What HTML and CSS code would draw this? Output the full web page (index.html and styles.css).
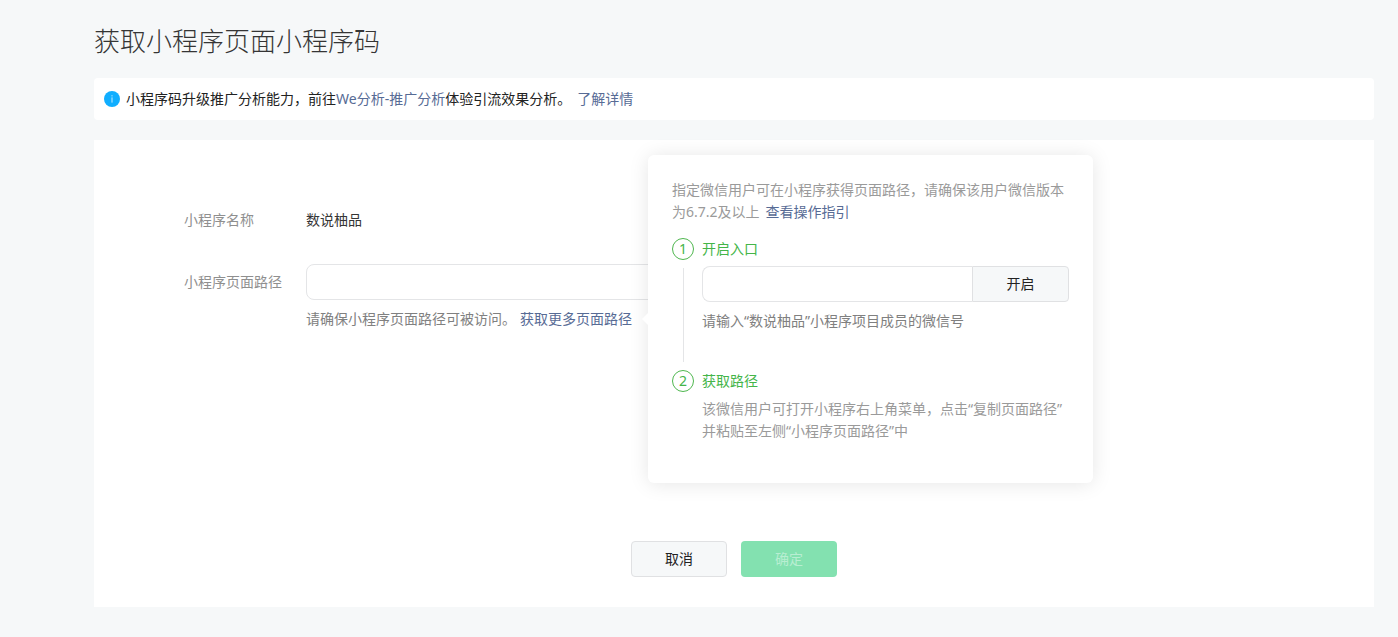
FILE: index.html
```html
<!DOCTYPE html>
<html lang="zh-CN">
<head>
<meta charset="utf-8">
<meta name="viewport" content="width=device-width, initial-scale=1">
<title>获取小程序页面小程序码</title>
<link rel="stylesheet" href="styles.css">
</head>
<body>
<main class="page">
  <h1 class="page-title">获取小程序页面小程序码</h1>

  <div class="notice">
    <svg class="notice-icon" viewBox="0 0 16 16" aria-hidden="true">
      <circle cx="8" cy="8" r="8" fill="#10aeff"/>
      <rect x="7.5" y="4.2" width="1" height="1.2" fill="#fff" opacity=".75"/>
      <rect x="7.5" y="6.4" width="1" height="5.2" fill="#fff" opacity=".75"/>
    </svg>
    <p class="notice-text">小程序码升级推广分析能力，前往<a href="#">We分析-推广分析</a>体验引流效果分析。<a class="spaced" href="#">了解详情</a></p>
  </div>

  <form class="panel">
    <div class="field">
      <span class="field-label">小程序名称</span>
      <span class="field-value">数说柚品</span>
    </div>
    <div class="field">
      <label class="field-label path-label" for="path">小程序页面路径</label>
      <div class="field-body">
        <input class="text-input" id="path" type="text">
        <div class="hint">请确保小程序页面路径可被访问。<span class="anchor"><a href="#">获取更多页面路径</a>
          <section class="popover">
            <p class="popover-intro">指定微信用户可在小程序获得页面路径，请确保该用户微信版本为6.7.2及以上<a class="spaced" href="#">查看操作指引</a></p>
            <ol class="steps">
              <li class="step">
                <div class="step-marker"><span class="step-number">1</span><span class="step-line"></span></div>
                <div class="step-body">
                  <label class="step-title" for="member">开启入口</label>
                  <div class="input-group">
                    <input class="text-input" id="member" type="text">
                    <button class="button group-button" type="button">开启</button>
                  </div>
                  <p class="step-hint">请输入“数说柚品”小程序项目成员的微信号</p>
                </div>
              </li>
              <li class="step">
                <div class="step-marker"><span class="step-number">2</span></div>
                <div class="step-body">
                  <h2 class="step-title">获取路径</h2>
                  <p class="step-text">该微信用户可打开小程序右上角菜单，点击“复制页面路径”并粘贴至左侧“小程序页面路径”中</p>
                </div>
              </li>
            </ol>
          </section></span>
        </div>
      </div>
    </div>
    <div class="actions">
      <button class="button" type="button">取消</button>
      <button class="button primary" type="submit" disabled>确定</button>
    </div>
  </form>
</main>
</body>
</html>
```

FILE: styles.css
```css
* {
  box-sizing: border-box;
}

body {
  margin: 0;
  background: #f6f8f9;
  color: #353535;
  font: 400 14px/22px "Noto Sans", "Noto Sans CJK SC", sans-serif;
}

h1, h2, p, ol {
  margin: 0;
  padding: 0;
  font-weight: inherit;
}

a {
  color: #576b95;
  text-decoration: none;
}

input, button {
  font: inherit;
}

.page {
  padding: 22px 24px 30px 94px;
}

.page-title {
  font-size: 26px;
  font-weight: 300;
  line-height: 38px;
}

.notice {
  display: flex;
  align-items: center;
  gap: 6px;
  margin-top: 18px;
  padding: 10px;
  border-radius: 4px;
  background: #fff;
  color: #222;
}

.notice-icon {
  width: 16px;
  height: 16px;
}

.spaced {
  margin-left: 6px;
}

.panel {
  margin-top: 20px;
  padding: 69px 90px 30px;
  background: #fff;
}

.field {
  display: flex;
}

.field + .field {
  margin-top: 33px;
}

.field-label {
  flex: 0 0 122px;
  color: #8f8f8f;
}

.path-label {
  line-height: 36px;
}

.field-body {
  flex: 0 1 500px;
  min-width: 0;
}

.text-input {
  display: block;
  width: 100%;
  height: 36px;
  padding: 0 10px;
  border: 1px solid #e4e5e7;
  border-radius: 8px;
  background: #fff;
}

.hint {
  margin-top: 8px;
  color: #808080;
}

.anchor {
  position: relative;
  display: inline-block;
  margin-left: 4px;
}

.popover {
  position: absolute;
  z-index: 1;
  top: -153px;
  left: calc(100% + 16px);
  width: 445px;
  padding: 24px 24px 41px;
  border-radius: 6px;
  background: #fff;
  box-shadow: 0 1px 20px rgba(0, 0, 0, 0.1);
  color: #9a9a9a;
}

.popover::before {
  content: "";
  position: absolute;
  top: 158px;
  left: -6px;
  border: solid transparent;
  border-width: 6px 6px 6px 0;
  border-right-color: #fff;
}

.steps {
  margin-top: 15px;
  list-style: none;
}

.step {
  display: flex;
  gap: 8px;
}

.step-marker {
  display: flex;
  flex-direction: column;
  align-items: center;
}

.step-number {
  width: 22px;
  height: 22px;
  border: 1px solid #4fb74f;
  border-radius: 50%;
  color: #44b549;
  line-height: 20px;
  text-align: center;
}

.step-line {
  flex: 1;
  width: 1px;
  margin: 8px 0;
  background: #e4e5e7;
}

.step-body {
  flex: 1;
}

.step:first-child .step-body {
  padding-bottom: 38px;
}

.step-title {
  display: block;
  color: #44b549;
  font-size: 14px;
}

.input-group {
  display: flex;
  margin-top: 6px;
}

.input-group .text-input {
  flex: 1;
  min-width: 0;
  border-right: 0;
  border-radius: 8px 0 0 8px;
}

.step-hint {
  margin-top: 8px;
  color: #808080;
}

.step-text {
  margin-top: 6px;
}

.button {
  width: 96px;
  height: 36px;
  border: 1px solid #e0e1e3;
  border-radius: 4px;
  background: #f6f8f9;
  color: #222;
}

.group-button {
  width: 97px;
  border-radius: 0 4px 4px 0;
}

.actions {
  display: flex;
  justify-content: center;
  gap: 14px;
  margin-top: 211px;
}

.primary {
  border: 0;
  background: #83e1b0;
  color: #b8eed2;
}
```
